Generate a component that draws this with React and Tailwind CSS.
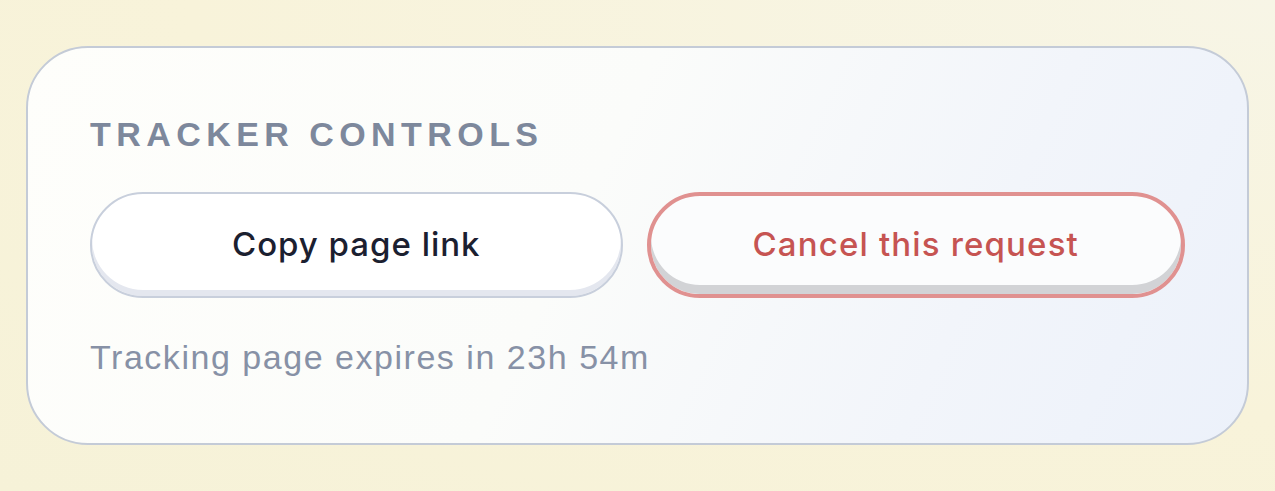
import React from "react";

const App = () => {
  return (
    <div className="w-[1275px] h-[491px] overflow-hidden bg-[radial-gradient(ellipse_at_top_right,#f7f5e6,#f8f3da_60%,#f6f2d8)] pt-[46px] pl-[26px] font-['Liberation_Sans',Arial,sans-serif]">
      <div className="w-[1223px] h-[399px] rounded-[62px] border-2 border-[#c4cbd7] bg-[linear-gradient(115deg,#fefefb_0%,#fbfcfa_45%,#f2f5fa_75%,#ecf1fa_100%)] pl-[62px] pr-[62px] pt-[66px]">
        <h2 className="text-[34px] leading-[40px] font-bold tracking-[0.16em] text-[#7d889c]">
          TRACKER CONTROLS
        </h2>
        <div className="mt-[38px] flex gap-[24px] font-['Inter',sans-serif]">
          <button className="w-[534px] h-[106px] rounded-full border-2 border-[#c8cfdc] bg-white shadow-[inset_0_-6px_0_#e4e7ef] text-[33px] tracking-[0.03em] font-medium text-[#1b2030]">
            Copy page link
          </button>
          <button className="w-[540px] h-[106px] rounded-full border-4 border-[#e09190] bg-[#fbfcfd] shadow-[inset_0_-9px_0_#d2d3d6] text-[33px] tracking-[0.035em] font-medium text-[#c65452]">
            Cancel this request
          </button>
        </div>
        <p className="mt-[39px] text-[34px] leading-[40px] tracking-[0.045em] text-[#8791a6]">
          Tracking page expires in 23h 54m
        </p>
      </div>
    </div>
  );
};

export default App;
